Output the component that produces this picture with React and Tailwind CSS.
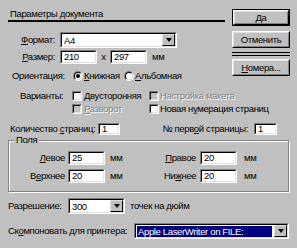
import React from 'react';

const sunken = 'border border-t-[#808080] border-l-[#808080] border-b-white border-r-white';
const sunkenInner = 'border border-t-black border-l-black border-b-[#dfdfdf] border-r-[#dfdfdf]';

const TextBox = ({ value, className = '' }) => (
  <div className={`${sunken} ${className}`}>
    <div className={`${sunkenInner} h-full bg-white pl-[2px] leading-[10px] flex items-center`}>{value}</div>
  </div>
);

const ArrowBtn = () => (
  <div className="w-[13px] h-full bg-[#c0c0c0] border border-t-[#dfdfdf] border-l-[#dfdfdf] border-b-black border-r-black flex items-center justify-center">
    <div className="w-0 h-0 border-l-[3.5px] border-r-[3.5px] border-t-[4px] border-l-transparent border-r-transparent border-t-black" />
  </div>
);

const Select = ({ value, className = '', selected = false }) => (
  <div className={`${sunken} ${className}`}>
    <div className={`${sunkenInner} h-full bg-white flex`}>
      <div className="flex-1 flex items-center pl-[1px] pr-[2px]">
        <span className={`px-[1px] leading-[11px] ${selected ? 'bg-[#000080] text-white flex-1' : ''}`}>{value}</span>
      </div>
      <ArrowBtn />
    </div>
  </div>
);

const Button = ({ children, isDefault = false, className = '' }) => (
  <div className={`h-[17px] ${isDefault ? 'border border-black' : ''} ${className}`}>
    <div className="h-full border border-t-white border-l-white border-b-black border-r-black">
      <div className="h-full border border-t-[#dfdfdf] border-l-[#dfdfdf] border-b-[#808080] border-r-[#808080] flex items-center justify-center leading-[11px]">
        {children}
      </div>
    </div>
  </div>
);

const Check = ({ disabled = false }) => (
  <div className={`w-[10px] h-[10px] ${sunken} shrink-0`}>
    <div className={`${sunkenInner} h-full ${disabled ? 'bg-[#c0c0c0]' : 'bg-white'}`} />
  </div>
);

const Radio = ({ checked = false }) => (
  <div className="w-[10px] h-[10px] rounded-full border border-t-[#808080] border-l-[#808080] border-b-white border-r-white shrink-0">
    <div className="h-full rounded-full border border-t-black border-l-black border-b-[#dfdfdf] border-r-[#dfdfdf] bg-white flex items-center justify-center">
      {checked && <div className="w-[4px] h-[4px] rounded-full bg-black" />}
    </div>
  </div>
);

const dis = 'text-[#808080] [text-shadow:1px_1px_0_#fff]';

export default function App() {
  return (
    <div
      className="w-[297px] h-[248px] overflow-hidden bg-[#c0c0c0] text-black text-[9.5px] tracking-[-0.35px] leading-[12px] whitespace-nowrap"
      style={{ fontFamily: '"Liberation Sans", Arial, sans-serif' }}
    >
      {/* top: params + buttons */}
      <div className="flex">
        <div className="w-[225px] pl-[8px]">
          <div className="pt-[8px] pl-[2px] h-[20px]">Параметры документа</div>
          <div className="h-[2px] bg-black" />

          <div className="flex items-center h-[16px] mt-[10px]">
            <div className="w-[47px] text-right"><u>Ф</u>ормат:</div>
            <Select value="А4" className="ml-[5px] w-[117px] h-[16px]" />
          </div>

          <div className="flex items-center h-[14px] mt-[2px]">
            <div className="w-[47px] text-right"><u>Р</u>азмер:</div>
            <TextBox value="210" className="ml-[5px] w-[37px] h-[14px]" />
            <div className="w-[13px] text-center">x</div>
            <TextBox value="297" className="w-[37px] h-[14px]" />
            <div className="ml-[5px]">мм</div>
          </div>

          <div className="flex items-center h-[12px] mt-[6px]">
            <div className="pl-[4px] w-[65px]">Ориентация:</div>
            <Radio checked />
            <div className="ml-[1px] w-[40px]"><u>К</u>нижная</div>
            <Radio />
            <div className="ml-[1px]"><u>А</u>льбомная</div>
          </div>
        </div>

        <div className="ml-[7px] w-[58px] pt-[9px] flex flex-col">
          <Button isDefault>Да</Button>
          <Button className="mt-[5px]">Отменить</Button>
          <div className="mt-[4px] h-px bg-black" />
          <div className="mt-[2px] h-px bg-black" />
          <Button className="mt-[3px]">
            <span><u>Н</u>омера...</span>
          </Button>
        </div>
      </div>

      {/* variants */}
      <div className="flex items-center h-[12px] mt-[8px]">
        <div className="pl-[20px] w-[72px]">Варианты:</div>
        <Check />
        <div className="ml-[2px] w-[65px]"><u>Д</u>вусторонняя</div>
        <Check disabled />
        <div className={`ml-[1px] ${dis}`}>Настройка макета</div>
      </div>
      <div className="flex items-center h-[12px] mt-[1px]">
        <div className="w-[72px]" />
        <Check disabled />
        <div className={`ml-[2px] w-[65px] ${dis}`}><u>Р</u>азворот</div>
        <Check />
        <div className="ml-[1px]">Новая н<u>у</u>мерация страниц</div>
      </div>

      {/* pages */}
      <div className="flex items-center h-[13px] mt-[7px] pr-[20px]">
        <div className="pl-[10px] w-[98px]">Количество <u>с</u>траниц:</div>
        <TextBox value="1" className="w-[22px] h-[12px]" />
        <div className="ml-auto mr-[6px]">№ перв<u>о</u>й страницы:</div>
        <TextBox value="1" className="w-[23px] h-[12px]" />
      </div>

      {/* margins group */}
      <div className="relative mt-[5px] ml-[8px] w-[281px] h-[52px] border border-[#808080] shadow-[inset_1px_1px_0_#fff,1px_1px_0_#fff]">
        <div className="absolute -top-[7px] left-[5px] px-[2px] bg-[#c0c0c0]">Поля</div>
        <div className="flex flex-col gap-[4px] pt-[10px]">
          <div className="flex items-center h-[14px]">
            <div className="w-[56px] text-right"><u>Л</u>евое</div>
            <TextBox value="25" className="ml-[3px] w-[37px] h-[14px]" />
            <div className="ml-[5px] w-[54px]">мм</div>
            <div className="w-[32px] text-right"><u>П</u>равое</div>
            <TextBox value="20" className="ml-[4px] w-[37px] h-[14px]" />
            <div className="ml-[7px]">мм</div>
          </div>
          <div className="flex items-center h-[14px]">
            <div className="w-[56px] text-right">В<u>е</u>рхнее</div>
            <TextBox value="20" className="ml-[3px] w-[37px] h-[14px]" />
            <div className="ml-[5px] w-[54px]">мм</div>
            <div className="w-[32px] text-right">Ни<u>ж</u>нее</div>
            <TextBox value="20" className="ml-[4px] w-[37px] h-[14px]" />
            <div className="ml-[7px]">мм</div>
          </div>
        </div>
      </div>

      {/* resolution */}
      <div className="flex items-center h-[16px] mt-[6px]">
        <div className="pl-[8px] w-[68px]">Разрешение:</div>
        <Select value="300" className="w-[57px] h-[16px]" />
        <div className="ml-[5px]">точек на дюйм</div>
      </div>

      {/* printer */}
      <div className="flex items-center h-[16px] mt-[9px]">
        <div className="pl-[8px] w-[134px]">Ск<u>о</u>мпоновать для принтера:</div>
        <Select selected value="Apple LaserWriter on FILE:" className="w-[155px] h-[16px]" />
      </div>
    </div>
  );
}
